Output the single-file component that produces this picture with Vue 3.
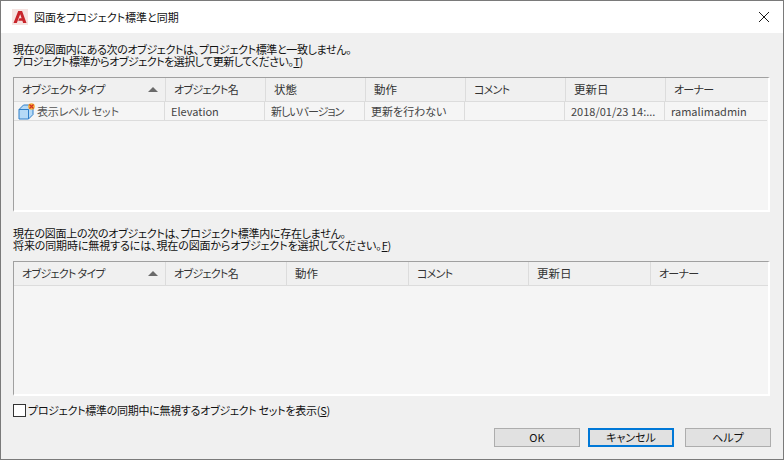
<script setup>
const columnsA = ['オブジェクト名', '状態', '動作', 'コメント', '更新日', 'オーナー']
const rowA = ['Elevation', '新しいバージョン', '更新を行わない', '', '2018/01/23 14:...', 'ramalimadmin']
const columnsB = ['オブジェクト名', '動作', 'コメント', '更新日', 'オーナー']
const isKanji = (text) => /^[\u4e00-\u9fff]+$/.test(text)
const isLongKana = (text) => text.includes('ー')
</script>

<template>
  <div class="window">
    <header class="titlebar">
      <svg class="app-icon" width="16" height="16" viewBox="0 0 16 16">
        <rect width="16" height="16" fill="#f6e3e1" />
        <path d="M1.5 14 6.2 2h3.900L14.500 14h-3.400l-.7-2.200H6.200L7.400 9.200h2.200L8.200 5.200 4.800 14z" fill="#c8242b" />
      </svg>
      <span class="title">図面をプロジェクト標準と同期</span>
      <svg class="close" width="12" height="12" viewBox="0 0 12 12">
        <path d="M1 1 11 11M11 1 1 11" stroke="#1a1a1a" stroke-width="1" fill="none" />
      </svg>
    </header>

    <main class="content">
      <p class="intro first">
        <span class="s2">現在の図面内にある次のオブジェクトは、プロジェクト標準と一致しません。</span><br />
        <span class="s5">プロジェクト標準からオブジェクトを選択して更新してください。<u>T</u>)</span>
      </p>
      <section class="list">
        <div class="row head cols-a">
          <div class="cell sort">オブジェクト タイプ<i class="arrow"></i></div>
          <div v-for="c in columnsA" :key="c" class="cell" :class="{ kanji: isKanji(c) }">{{ c }}</div>
        </div>
        <div class="row data cols-a-data">
          <div class="cell type">
            <svg width="17" height="17" viewBox="0 0 17 17">
              <path d="M1 6.500 5.500 2H15v9.500L10.500 16H1z" fill="#b5daf7" stroke="#2f7fc9" />
              <path d="M1 6.500h9.500V16M10.500 6.500 15 2" fill="none" stroke="#2f7fc9" />
              <circle cx="13.500" cy="3.500" r="3.300" fill="#f5b13a" />
              <path d="M11.500 1.500l4 4M15.500 1.500l-4 4" stroke="#d3301f" stroke-width="1.200" />
            </svg>
            表示レベル セット
          </div>
          <div v-for="(v, i) in rowA" :key="i" class="cell" :class="{ tight: isLongKana(v) }">{{ v }}</div>
        </div>
      </section>

      <p class="intro second">
        <span class="s3">現在の図面上の次のオブジェクトは、プロジェクト標準内に存在しません。</span><br />
        <span class="s1">将来の同期時に無視するには、現在の図面からオブジェクトを選択してください。<u>F</u>)</span>
      </p>
      <section class="list">
        <div class="row head cols-b">
          <div class="cell sort">オブジェクト タイプ<i class="arrow"></i></div>
          <div v-for="c in columnsB" :key="c" class="cell" :class="{ kanji: isKanji(c) }">{{ c }}</div>
        </div>
      </section>

      <label class="check">
        <span class="box"></span>
        <span class="s3">プロジェクト標準の同期中に無視するオブジェクト セットを表示(<u>S</u>)</span>
      </label>

      <div class="actions">
        <button class="btn">OK</button>
        <button class="btn default">キャンセル</button>
        <button class="btn help">ヘルプ</button>
      </div>
    </main>
  </div>
</template>

<style>
html, body { margin: 0; background: #f0f0f0; }
</style>

<style scoped>
.window {
  width: 784px;
  height: 460px;
  box-sizing: border-box;
  border: 1px solid #7a7a7a;
  background: #f0f0f0;
  display: flex;
  flex-direction: column;
  overflow: hidden;
  font-family: "Noto Sans CJK JP", "Noto Sans", sans-serif;
  font-feature-settings: "palt";
  font-size: 11px;
  color: #111;
}
.s1 { letter-spacing: -0.12px; }
.s2 { letter-spacing: -0.36px; }
.s3 { letter-spacing: -0.28px; }
.s5 { letter-spacing: -0.5px; }
.titlebar {
  height: 32px;
  flex: none;
  background: #fff;
  display: flex;
  align-items: center;
  padding: 0 13px 0 11px;
}
.app-icon { flex: none; }
.title { margin-left: 6px; flex: 1; }
.close { flex: none; }
.content {
  flex: 1;
  min-height: 0;
  padding: 0 12px;
  display: flex;
  flex-direction: column;
}
.intro { margin: 0; line-height: 12px; }
.first { padding-top: 10px; height: 34px; }
.second { padding-top: 15px; height: 34px; }
.list {
  height: 135px;
  margin-right: 1px;
  box-sizing: border-box;
  background: #f5f5f5;
  border-top: 1px solid #a0a0a0;
  border-left: 1px solid #a0a0a0;
  border-right: 2px solid #fff;
  border-bottom: 2px solid #fff;
  flex: none;
}
.row { display: grid; }
.cols-a { grid-template-columns: 152px 100px 100px 100px 100px 100px 103px; }
.cols-a-data { grid-template-columns: 151px 100px 100px 100px 100px 100px 102px; margin-right: 1px; }
.cols-b { grid-template-columns: 152px 121px 122px 120px 122px 118px; }
.head { height: 24px; background: #f0f0f0; border-bottom: 1px solid #dcdcdc; box-sizing: border-box; color: #333; }
.head .cell {
  border-right: 1px solid #dcdcdc;
  padding-left: 8px;
  height: 23px;
  line-height: 22px;
  position: relative;
  white-space: nowrap;
  letter-spacing: -0.7px;
}
.head .cell.kanji { font-size: 11.5px; letter-spacing: 0; }
.head .cell:last-child { border-right: 0; }
.arrow {
  position: absolute;
  right: 7px;
  top: 9px;
  width: 0;
  height: 0;
  border-left: 5px solid transparent;
  border-right: 5px solid transparent;
  border-bottom: 5px solid #6a6a6a;
}
.data { height: 18px; border-bottom: 1px solid #dcdcdc; box-sizing: content-box; color: #444; }
.data .cell {
  border-right: 1px solid #dcdcdc;
  padding-left: 6px;
  line-height: 19px;
  white-space: nowrap;
  overflow: hidden;
}
.data .cell.tight { letter-spacing: -1px; }
.data .cell:last-child { border-right: 0; }
.data .type {
  padding-left: 4px;
  display: flex;
  align-items: center;
  gap: 2px;
  color: #555;
  letter-spacing: -0.15px;
}
.check {
  display: flex;
  align-items: center;
  gap: 2px;
  height: 14px;
  margin-top: 7px;
  line-height: 14px;
}
.box {
  width: 11px;
  height: 11px;
  flex: none;
  border: 1px solid #333;
  background: #fff;
}
.actions {
  display: flex;
  justify-content: flex-end;
  gap: 8px;
  margin-top: 11px;
}
.btn {
  width: 86px;
  height: 19px;
  box-sizing: border-box;
  padding: 0;
  border: 1px solid #adadad;
  background: #e1e1e1;
  font: inherit;
  font-feature-settings: "palt";
  color: #111;
  line-height: 15px;
}
.btn.default { border: 2px solid #0078d7; }
.btn.help { margin-left: 3px; }
</style>
